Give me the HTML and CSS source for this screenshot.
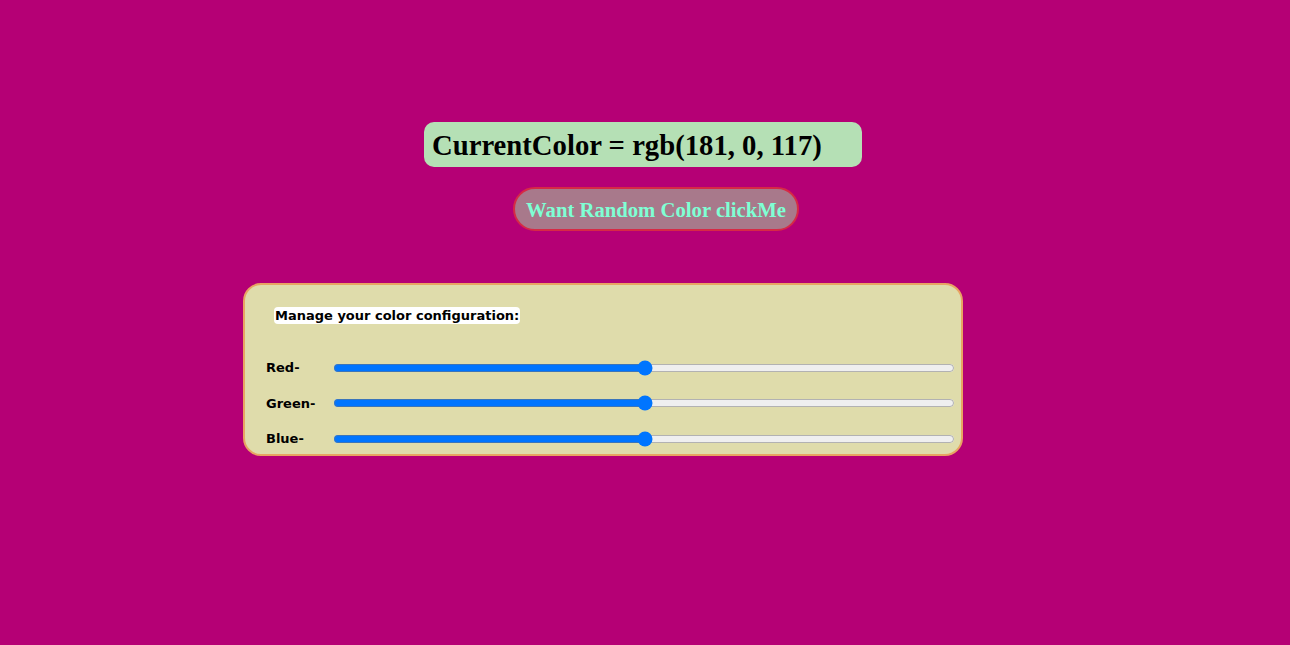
FILE: index.html
```html
<!DOCTYPE html>
<html>
<head>
<meta charset="utf-8">
<title>Color Picker</title>
<link rel="stylesheet" href="styles.css">
</head>
<body>
<main class="page">
  <h1 class="current">CurrentColor = rgb(181, 0, 117)</h1>
  <button class="random">Want Random Color clickMe</button>
  <section class="card">
    <div class="card-title"><span class="title-text">Manage your color configuration:</span></div>
    <div class="row"><label class="lbl">Red-</label><input class="slider" type="range" min="0" max="255" value="128"></div>
    <div class="row"><label class="lbl">Green-</label><input class="slider" type="range" min="0" max="255" value="128"></div>
    <div class="row"><label class="lbl">Blue-</label><input class="slider" type="range" min="0" max="255" value="128"></div>
  </section>
</main>
</body>
</html>
```
FILE: styles.css
```css
html, body {
  margin: 0;
  padding: 0;
}
body {
  background: rgb(181, 0, 117);
  min-height: 645px;
}
.page {
  display: flex;
  flex-direction: column;
  align-items: center;
  padding-top: 122px;
}
.current {
  box-sizing: border-box;
  width: 438px;
  height: 45px;
  margin: 0;
  padding: 0 0 0 8px;
  background: #b5e0b5;
  border-radius: 10px;
  font-family: "Liberation Serif", "Times New Roman", serif;
  font-weight: bold;
  font-size: 28.7px;
  line-height: 47px;
  color: #000;
  text-align: left;
  margin-left: -4px;
}
.random {
  box-sizing: border-box;
  width: 286px;
  height: 44px;
  margin: 20px 0 0 22px;
  padding: 2px 0 0;
  background: #a8798b;
  border: 2px solid #d62a45;
  border-radius: 22px;
  color: #7fffd4;
  font-family: "Liberation Serif", "Times New Roman", serif;
  font-weight: bold;
  font-size: 20.7px;
}
.card {
  box-sizing: border-box;
  align-self: flex-start;
  margin: 52px 0 0 243px;
  width: 720px;
  height: 173px;
  background: #dfdcab;
  border: 2px solid #e8a462;
  border-radius: 18px;
  padding: 22px 6px 0 21px;
  font-family: "DejaVu Sans", Verdana, sans-serif;
  font-size: 13px;
  font-weight: bold;
  color: #000;
}
.card-title {
  height: 17px;
  line-height: 17px;
  margin-bottom: 26px;
  padding-left: 8px;
}
.title-text {
  background: #fff;
  padding: 1px 1px;
  border-radius: 4px;
}
.row {
  display: flex;
  align-items: center;
  height: 35.5px;
}
.lbl {
  width: 67px;
  flex: none;
}
.slider {
  width: 622px;
  margin: 0;
}
```
